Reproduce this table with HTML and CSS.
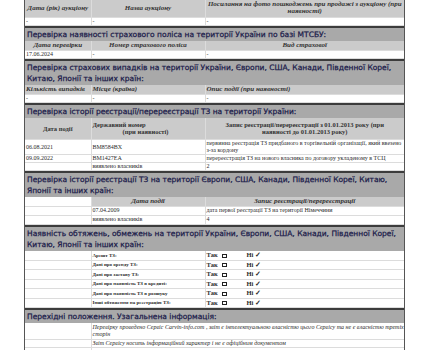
FILE: index.html
```html
<!DOCTYPE html>
<html lang="uk">
<head>
<meta charset="utf-8">
<title>Звіт</title>
<link rel="stylesheet" href="styles.css">
</head>
<body>
<div class="doc">
  <table class="t">
    <colgroup><col class="c1"><col class="c2"><col class="c3"></colgroup>
    <tr class="hd h17"><th class="ctr">Дата (рік) аукціону</th><th class="ctr">Назва аукціону</th><th class="ctr">Посилання на фото пошкоджень при продажі з аукціону (при<br>наявності)</th></tr>
    <tr class="r8"><td>-</td><td>-</td><td>-</td></tr>
  </table>
  <div class="sec">Перевірка наявності страхового поліса на території України по базі МТСБУ:</div>
  <table class="t">
    <colgroup><col class="c1"><col class="c2"><col class="c3"></colgroup>
    <tr class="hd h10"><th class="ctr">Дата перевірки</th><th class="ctr">Номер страхового поліса</th><th class="ctr">Вид страхової</th></tr>
    <tr class="r8"><td>17.06.2024</td><td>-</td><td>-</td></tr>
  </table>
  <div class="sec">Перевірка страхових випадків на території України, Європи, США, Канади, Південної Кореї,<br>Китаю, Японії та інших країн:</div>
  <table class="t">
    <colgroup><col class="c1"><col class="c2"><col class="c3"></colgroup>
    <tr class="hd h9"><th>Кількість випадків</th><th>Місце (країна)</th><th>Опис події (при наявності)</th></tr>
    <tr class="r8"><td>-</td><td>-</td><td>-</td></tr>
  </table>
  <div class="sec">Перевірка історії реєстрації/перереєстрації ТЗ на території України:</div>
  <table class="t">
    <colgroup><col class="c1"><col class="c2"><col class="c3"></colgroup>
    <tr class="hd up h22"><th class="ctr">Дата події</th><th>Державний номер<br><span class="ind">(при наявності)</span></th><th class="ctr">Запис реєстрації/перереєстрації з 01.01.2013 року (при<br>наявності до 01.01.2013 року)</th></tr>
    <tr class="r15"><td>06.08.2021</td><td>BM8584BX</td><td>первинна реєстрація ТЗ придбаного в торгівельній організації, який ввезено<br>з-за кордону</td></tr>
    <tr class="r8"><td>09.09.2022</td><td>BM1427EA</td><td>перереєстрація ТЗ на нового власника по договору укладеному в ТСЦ</td></tr>
    <tr class="r8"><td></td><td>виявлено власників</td><td>2</td></tr>
  </table>
  <div class="sec">Перевірка історії реєстрації ТЗ на території Європи, США, Канади, Південної Кореї, Китаю,<br>Японії та інших країн:</div>
  <table class="t">
    <colgroup><col class="c1"><col class="c2"><col class="c3"></colgroup>
    <tr class="hd h9"><td class="blank"></td><th class="ctr">Дата події</th><th class="ctr">Запис реєстрації/перереєстрації</th></tr>
    <tr class="r9"><td></td><td>07.04.2009</td><td>дата первої реєстрації ТЗ на території Німеччини</td></tr>
    <tr class="r9"><td></td><td>виявлено власників</td><td>4</td></tr>
  </table>
  <div class="sec">Наявність обтяжень, обмежень на території України, Європи, США, Канади, Південної Кореї,<br>Китаю, Японії та інших країн:</div>
  <table class="t chk">
    <colgroup><col class="c1"><col class="c2"><col class="c3"></colgroup>
    <tr><td></td><td class="lbl">Арешт ТЗ:</td><td><span class="yes">Так <i class="box"></i></span><span class="no">Ні ✓</span></td></tr>
    <tr><td></td><td class="lbl">Дані про оренду ТЗ:</td><td><span class="yes">Так <i class="box"></i></span><span class="no">Ні ✓</span></td></tr>
    <tr><td></td><td class="lbl">Дані про заставу ТЗ:</td><td><span class="yes">Так <i class="box"></i></span><span class="no">Ні ✓</span></td></tr>
    <tr><td></td><td class="lbl">Дані про наявність ТЗ в кредиті:</td><td><span class="yes">Так <i class="box"></i></span><span class="no">Ні ✓</span></td></tr>
    <tr><td></td><td class="lbl">Дані про наявність ТЗ в розшуку</td><td><span class="yes">Так <i class="box"></i></span><span class="no">Ні ✓</span></td></tr>
    <tr><td></td><td class="lbl">Інші обтяження на реєстрацію ТЗ:</td><td><span class="yes">Так <i class="box"></i></span><span class="no">Ні ✓</span></td></tr>
  </table>
  <div class="sec">Перехідні положення. Узагальнена інформація:</div>
  <table class="t info">
    <colgroup><col class="c1"><col class="c2"><col class="c3"></colgroup>
    <tr class="r16"><td></td><td colspan="2">Перевірку проведено Сервіс Carvin-info.com , звіт є інтелектуальною власністю цього Сервісу та не є власністю третіх<br>сторін</td></tr>
    <tr class="r8"><td></td><td colspan="2">Звіт Сервісу носить інформаційний характер і не є офіційним документом</td></tr>
    <tr class="r8"><td></td><td colspan="2"></td></tr>
  </table>
</div>
</body>
</html>
```

FILE: styles.css
```css
* { box-sizing: border-box; }
html, body { margin: 0; padding: 0; background: #fff; }
body { font-family: "Liberation Serif", "Times New Roman", serif; color: #2a2a2a; }

.doc {
  margin-left: 24px;
  width: 381px;
  border-left: 1px solid #555;
  border-right: 1px solid #555;
}

.t { width: 100%; border-collapse: collapse; table-layout: fixed; }
.c1 { width: 66px; }
.c2 { width: 114px; }

.t td, .t th {
  padding: 0 1px;
  font-size: 6px;
  line-height: 7px;
  text-align: left;
  vertical-align: middle;
  font-weight: normal;
  white-space: nowrap;
  overflow: hidden;
  border-bottom: 1px solid #dcdcdc;
  border-left: 1px solid #dcdcdc;
}
.t td:first-child, .t th:first-child { border-left: 0; }

.hd th { background: #cbcbcb; font-weight: bold; font-style: italic; font-size: 7px; color: #333; }
.hd.up th { font-style: normal; font-size: 6.5px; }
.hd .blank { background: #fff; }
.ctr { text-align: center !important; }
.ind { padding-left: 30px; }

.h17 { height: 17px; }
.h10 { height: 10px; }
.h9 { height: 9px; }
.h22 { height: 22px; }
.r8 { height: 8px; }
.r9 { height: 9px; }
.r15 { height: 15px; }
.r16 { height: 16px; }

.sec {
  background: #a9a9a9;
  border-top: 2px solid #3c3c3c;
  color: #1b1b4a;
  font-family: "DejaVu Sans", "Noto Sans", sans-serif;
  font-size: 7.5px;
  line-height: 11px;
  padding: 1px 2px;
  white-space: nowrap;
  -webkit-text-stroke: 0.25px #1b1b4a;
}

.chk tr { height: 9.5px; }
.chk .lbl { font-weight: bold; font-size: 5px; }
.yes, .no { font-weight: bold; font-size: 6.5px; display: inline-block; }
.yes { width: 40px; }
.box {
  display: inline-block;
  width: 5px;
  height: 4px;
  border: 1px solid #222;
  margin-left: 3px;
  vertical-align: middle;
}
.no { font-family: "Liberation Serif", serif; }

.info td { font-style: italic; }
```
